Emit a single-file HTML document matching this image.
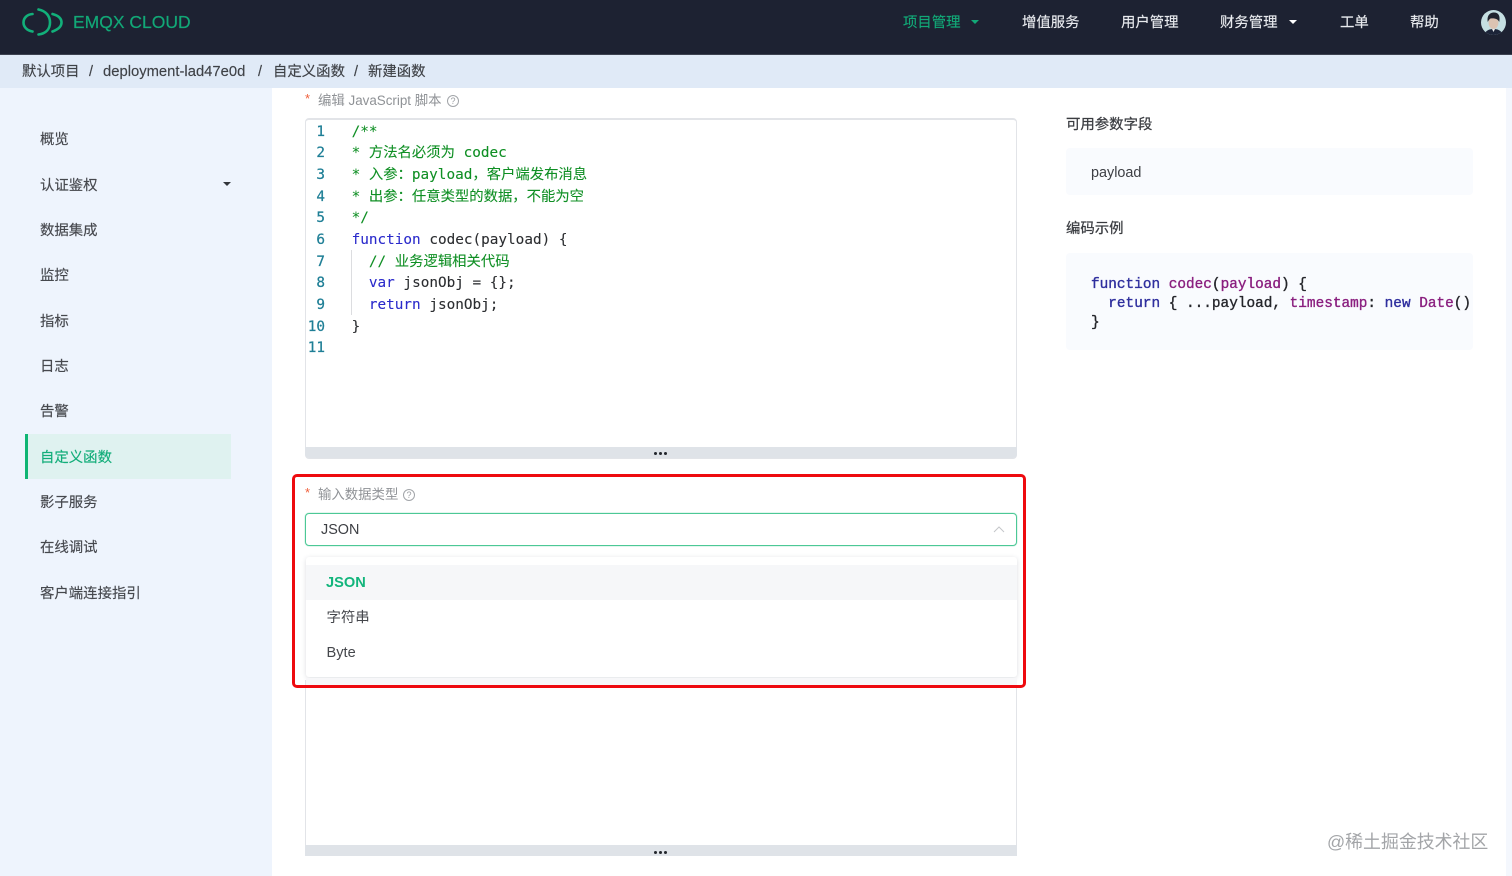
<!DOCTYPE html>
<html lang="zh-CN">
<head>
<meta charset="utf-8">
<title>EMQX Cloud</title>
<style>
html,body{margin:0;padding:0;width:1512px;height:876px;overflow:hidden;background:#fff}
body{font-family:"Liberation Sans","Noto Sans CJK SC",sans-serif;color:#3d3f44}
#w{position:relative;width:1512px;height:876px;overflow:hidden;filter:blur(.35px)}
.a{position:absolute;white-space:pre;line-height:20px}
.nav{font-size:14.4px;color:#e8eaee;top:13px;-webkit-text-stroke:.15px currentColor}
.side{font-size:14.4px;left:40px;color:#46484e;-webkit-text-stroke:.15px currentColor}
.crumb{font-size:14.4px;top:62px;color:#3f4247;-webkit-text-stroke:.15px currentColor}
.lab{font-size:13.4px;color:#8f9296}
.star{font-size:13px;color:#f0603c}
.ln{position:absolute;left:306px;width:19px;text-align:right;font:14.35px/21.65px "DejaVu Sans Mono",monospace;color:#1f7f96;-webkit-text-stroke:.25px currentColor}
.code{position:absolute;left:351.6px;font:14.35px/21.65px "DejaVu Sans Mono","Noto Sans CJK SC",monospace;color:#2b2d30;white-space:pre;-webkit-text-stroke:.1px currentColor}
.g{color:#0f8f24}.b{color:#2a2acb}
.ex{position:absolute;left:1091px;font:14.4px/19px "Liberation Mono",monospace;white-space:pre;color:#25262b;-webkit-text-stroke:.35px currentColor}
.ex .k{color:#2f2f9e}.ex .p{color:#8a1f7f}
.tri{position:absolute;width:0;height:0;border-left:4px solid transparent;border-right:4px solid transparent;border-top:4.5px solid #fff}
.hint{position:absolute;width:10px;height:10px;border:1px solid #a2a5a9;border-radius:50%;font-size:9px;line-height:10px;text-align:center;color:#9a9da1}
.dots{position:absolute;width:14px;height:4px}
.dots i{position:absolute;top:0;width:3px;height:3px;border-radius:50%;background:#23262c}
</style>
</head>
<body>
<div id="w">
<!-- main background -->
<div class="a" style="left:0;top:88px;width:272px;height:788px;background:#eef4fd"></div>
<div class="a" style="left:1506px;top:88px;width:6px;height:788px;background:#f4f7fd"></div>

<!-- header -->
<div class="a" style="left:0;top:0;width:1512px;height:54px;background:#1d2232;border-bottom:1px solid #3c4250"></div>
<svg class="a" style="left:20px;top:6px" width="46" height="32" viewBox="0 0 46 32" fill="none" stroke="#12b07a" stroke-width="2.6" stroke-linecap="round">
<path d="M12.5 8 C6.500 8.500 3.500 12.500 3.500 16.500 C3.500 20.500 6.500 24.500 12.500 25.500"/>
<path d="M18.500 3.500 C26 5 30 10 30 16.500 C30 23 26 27.500 18.500 28.500"/>
<path d="M32.500 8 C38 9.500 41.500 12.500 41.500 16.500 C41.500 20.500 38 23.500 32.500 25.500"/>
</svg>
<div class="a" style="left:73px;top:11px;font-size:17.5px;line-height:22px;color:#12a877;-webkit-text-stroke:.2px #12a877">EMQX CLOUD</div>
<div class="a nav" style="left:903px;color:#12a877">项目管理</div>
<div class="tri" style="left:971px;top:20px;border-top-color:#12a877"></div>
<div class="a nav" style="left:1022px">增值服务</div>
<div class="a nav" style="left:1121px">用户管理</div>
<div class="a nav" style="left:1220px">财务管理</div>
<div class="tri" style="left:1289px;top:20px"></div>
<div class="a nav" style="left:1340px">工单</div>
<div class="a nav" style="left:1410px">帮助</div>
<svg class="a" style="left:1481px;top:10px" width="25" height="26" viewBox="0 0 25 26">
<defs><clipPath id="c"><circle cx="12.500" cy="12.500" r="12.500"/></clipPath></defs>
<g clip-path="url(#c)">
<rect width="25" height="26" fill="#c5dfe2"/>
<path d="M3 26 C4 20 9 19 12.500 19 C16 19 21 20 22 26Z" fill="#1c2438"/>
<ellipse cx="12.500" cy="12.500" rx="5" ry="6.500" fill="#dcc3b2"/>
<path d="M6.800 12 C5.500 5 9.500 2.500 13 2.500 C17.500 2.500 19.500 6 18.200 12 C17 9 14 8 9.500 8.500 C8.500 9 7.800 10 6.800 12Z" fill="#20242f"/>
<path d="M11 19 L12.500 22 L14 19Z" fill="#eef1f3"/>
</g>
</svg>

<!-- breadcrumb -->
<div class="a" style="left:0;top:55px;width:1512px;height:33px;background:#e0eaf7"></div>
<div class="a crumb" style="left:22px">默认项目</div>
<div class="a crumb" style="left:89px">/</div>
<div class="a crumb" style="left:103px;font-size:14.8px">deployment-lad47e0d</div>
<div class="a crumb" style="left:258px">/</div>
<div class="a crumb" style="left:273px">自定义函数</div>
<div class="a crumb" style="left:354px">/</div>
<div class="a crumb" style="left:368px">新建函数</div>

<!-- sidebar -->
<div class="a side" style="top:130px">概览</div>
<div class="a side" style="top:176px">认证鉴权</div>
<div class="tri" style="left:223px;top:182px;border-top-color:#33363c"></div>
<div class="a side" style="top:221px">数据集成</div>
<div class="a side" style="top:266px">监控</div>
<div class="a side" style="top:312px">指标</div>
<div class="a side" style="top:357px">日志</div>
<div class="a side" style="top:402px">告警</div>
<div class="a" style="left:25px;top:434px;width:206px;height:45px;background:#dff2f0"></div>
<div class="a" style="left:25px;top:434px;width:3px;height:45px;background:#0fb574"></div>
<div class="a side" style="top:448px;color:#12ad79">自定义函数</div>
<div class="a side" style="top:493px">影子服务</div>
<div class="a side" style="top:538px">在线调试</div>
<div class="a side" style="top:584px">客户端连接指引</div>

<!-- label 1 -->
<div class="a star" style="left:305px;top:89px">*</div>
<div class="a lab" style="left:318px;top:91px">编辑 JavaScript 脚本</div>
<div class="hint" style="left:447px;top:95px">?</div>

<!-- editor 1 -->
<div class="a" style="left:305px;top:118px;width:710px;height:338px;border:1px solid #e2e4e8;border-top-width:2px;border-radius:4px"></div>
<div class="a" style="left:305px;top:447px;width:712px;height:11px;background:#dfe3e8;border-radius:0 0 4px 4px"></div>
<div class="dots" style="left:654px;top:452px"><i style="left:0"></i><i style="left:5px"></i><i style="left:10px"></i></div>
<div class="ln" style="top:121.6px">1<br>2<br>3<br>4<br>5<br>6<br>7<br>8<br>9<br>10<br>11</div>
<div class="a" style="left:351px;top:250px;width:1px;height:65px;background:#dcdde0"></div>
<div class="code" style="top:121.6px"><span class="g">/**
* 方法名必须为 codec
* 入参：payload，客户端发布消息
* 出参：任意类型的数据，不能为空
*/</span>
<span class="b">function</span> codec(payload) {
  <span class="g">// 业务逻辑相关代码</span>
  <span class="b">var</span> jsonObj = {};
  <span class="b">return</span> jsonObj;
}</div>

<!-- right column -->
<div class="a" style="left:1066px;top:115px;font-size:14.4px;color:#3a3c41;-webkit-text-stroke:.25px #3a3c41">可用参数字段</div>
<div class="a" style="left:1066px;top:148px;width:407px;height:47px;background:#f9fbfe;border-radius:4px"></div>
<div class="a" style="left:1091px;top:163px;font-size:14.4px;color:#3d3f44">payload</div>
<div class="a" style="left:1066px;top:219px;font-size:14.4px;color:#3a3c41;-webkit-text-stroke:.25px #3a3c41">编码示例</div>
<div class="a" style="left:1066px;top:253px;width:407px;height:97px;background:#f9fbfe;border-radius:4px"></div>
<div class="ex" style="top:276px;line-height:19px"><span class="k">function</span> <span class="p">codec</span>(<span class="p">payload</span>) {
  <span class="k">return</span> { ...payload, <span class="p">timestamp</span>: <span class="k">new</span> <span class="p">Date</span>()
}</div>

<!-- editor 2 -->
<div class="a" style="left:305px;top:680px;width:710px;height:176px;border-left:1px solid #e2e4e8;border-right:1px solid #e2e4e8"></div>
<div class="a" style="left:305px;top:845px;width:712px;height:11px;background:#dfe3e8"></div>
<div class="dots" style="left:654px;top:851px"><i style="left:0"></i><i style="left:5px"></i><i style="left:10px"></i></div>

<!-- select -->
<div class="a star" style="left:305px;top:483px">*</div>
<div class="a lab" style="left:318px;top:485px">输入数据类型</div>
<div class="hint" style="left:403px;top:489px">?</div>
<div class="a" style="left:305px;top:513px;width:710px;height:31px;border:1px solid #4cc896;border-radius:4px;box-shadow:0 0 1px #4cc896"></div>
<div class="a" style="left:321px;top:520px;font-size:14.4px;color:#3d3f44">JSON</div>
<svg class="a" style="left:993px;top:525px" width="12" height="8" viewBox="0 0 12 8" fill="none" stroke="#c4c6ca" stroke-width="1"><path d="M1 7 L6 2 L11 7"/></svg>

<!-- dropdown -->
<div class="a" style="left:306px;top:557px;width:711px;height:120px;background:#fff;border-radius:3px;box-shadow:0 1px 5px rgba(60,70,90,.18)"></div>
<div class="a" style="left:306px;top:565px;width:711px;height:35px;background:#f6f7f9"></div>
<div class="a" style="left:326px;top:573px;font-size:14.6px;font-weight:bold;color:#12b57c">JSON</div>
<div class="a" style="left:326.500px;top:608px;font-size:14.4px;color:#45474c">字符串</div>
<div class="a" style="left:326.500px;top:643px;font-size:14.6px;color:#45474c">Byte</div>
<div class="a" style="left:306px;top:678px;width:711px;height:8px;background:#f7f7f9"></div>

<!-- red highlight -->
<div class="a" style="left:292px;top:474px;width:728px;height:208px;border:3px solid #ee0a0f;border-radius:5px"></div>

<!-- watermark -->
<div class="a" style="left:1327px;top:832px;font-size:17.9px;color:#a3a5a8">@稀土掘金技术社区</div>
</div>
</body>
</html>
